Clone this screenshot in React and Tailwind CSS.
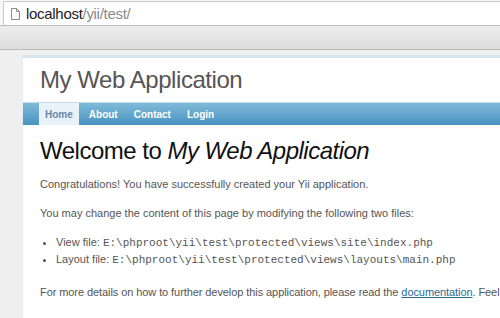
import React from "react";

export default function App() {
  const sans = { fontFamily: '"Liberation Sans", Arial, sans-serif' };
  const mono = { fontFamily: '"Liberation Mono", monospace' };
  return (
    <div className="w-[500px] h-[318px] overflow-hidden bg-[#efefef] flex flex-col" style={sans}>
      {/* address bar */}
      <div className="h-[26px] bg-[#f7f7f7] flex items-end pl-[3px] border-b border-[#bdbdbd]">
        <div className="h-[24px] flex-1 bg-white border-t border-l border-[#c9c9c9] rounded-tl-[2px] flex items-center pl-[7px] gap-[6px]">
          <svg width="9" height="12" viewBox="0 0 9 12" className="mt-[1px]">
            <path d="M0.5 0.5 H5.5 L8.5 3.5 V11.5 H0.5 Z" fill="white" stroke="#8a8a8a" />
            <path d="M5.5 0.5 V3.5 H8.5" fill="none" stroke="#8a8a8a" />
          </svg>
          <span className="text-[15px] leading-none text-[#222] tracking-[-0.3px]">
            localhost<span className="text-[#8a8a8a]">/yii/test/</span>
          </span>
        </div>
      </div>
      <div className="h-[24px] bg-gradient-to-b from-[#ececec] to-[#dedede] border-b border-[#b8b8b8]" />
      {/* page */}
      <div className="flex-1 pl-[22px] pt-[5px]">
        <div className="bg-white border-t-[3px] border-t-[#d3e5ef] border-l border-l-[#e2edf3] h-full">
          <div className="h-[44px] flex items-center pl-[17px]">
            <span className="text-[24px] text-[#555] leading-none tracking-[-0.45px]">My Web Application</span>
          </div>
          <div className="h-[23px] bg-gradient-to-b from-[#7fbad9] to-[#4893c0] flex items-end pl-[16px] border-t border-[#c3dde9]">
            <div className="h-[22px] px-[6px] bg-[#e9f2f8] flex items-center text-[10px] font-bold text-[#6b86ad]">Home</div>
            <div className="h-[22px] px-[8px] ml-[2px] flex items-center text-[10px] font-bold text-white">About</div>
            <div className="h-[22px] px-[8px] flex items-center text-[10px] font-bold text-white">Contact</div>
            <div className="h-[22px] px-[8px] flex items-center text-[10px] font-bold text-white">Login</div>
          </div>
          <div className="pl-[17px] pt-[11px] text-[#555] text-[11px]">
            <h1 className="text-[24px] leading-[30px] text-[#111] whitespace-nowrap tracking-[-0.5px]">
              Welcome to <i>My Web Application</i>
            </h1>
            <p className="mt-[10px] whitespace-nowrap">Congratulations! You have successfully created your Yii application.</p>
            <p className="mt-[12px] whitespace-nowrap">You may change the content of this page by modifying the following two files:</p>
            <ul className="mt-[13px] pl-[16px] list-disc whitespace-nowrap leading-[16px]">
              <li>
                View file: <code className="text-[11px]" style={mono}>E:\phproot\yii\test\protected\views\site\index.php</code>
              </li>
              <li>
                Layout file: <code className="text-[11px]" style={mono}>E:\phproot\yii\test\protected\views\layouts\main.php</code>
              </li>
            </ul>
            <p className="mt-[16px] whitespace-nowrap tracking-[-0.08px]">
              For more details on how to further develop this application, please read the{" "}
              <span className="text-[#2b6a94] underline">documentation</span>. Feel free to ask in the forum.
            </p>
          </div>
        </div>
      </div>
    </div>
  );
}
